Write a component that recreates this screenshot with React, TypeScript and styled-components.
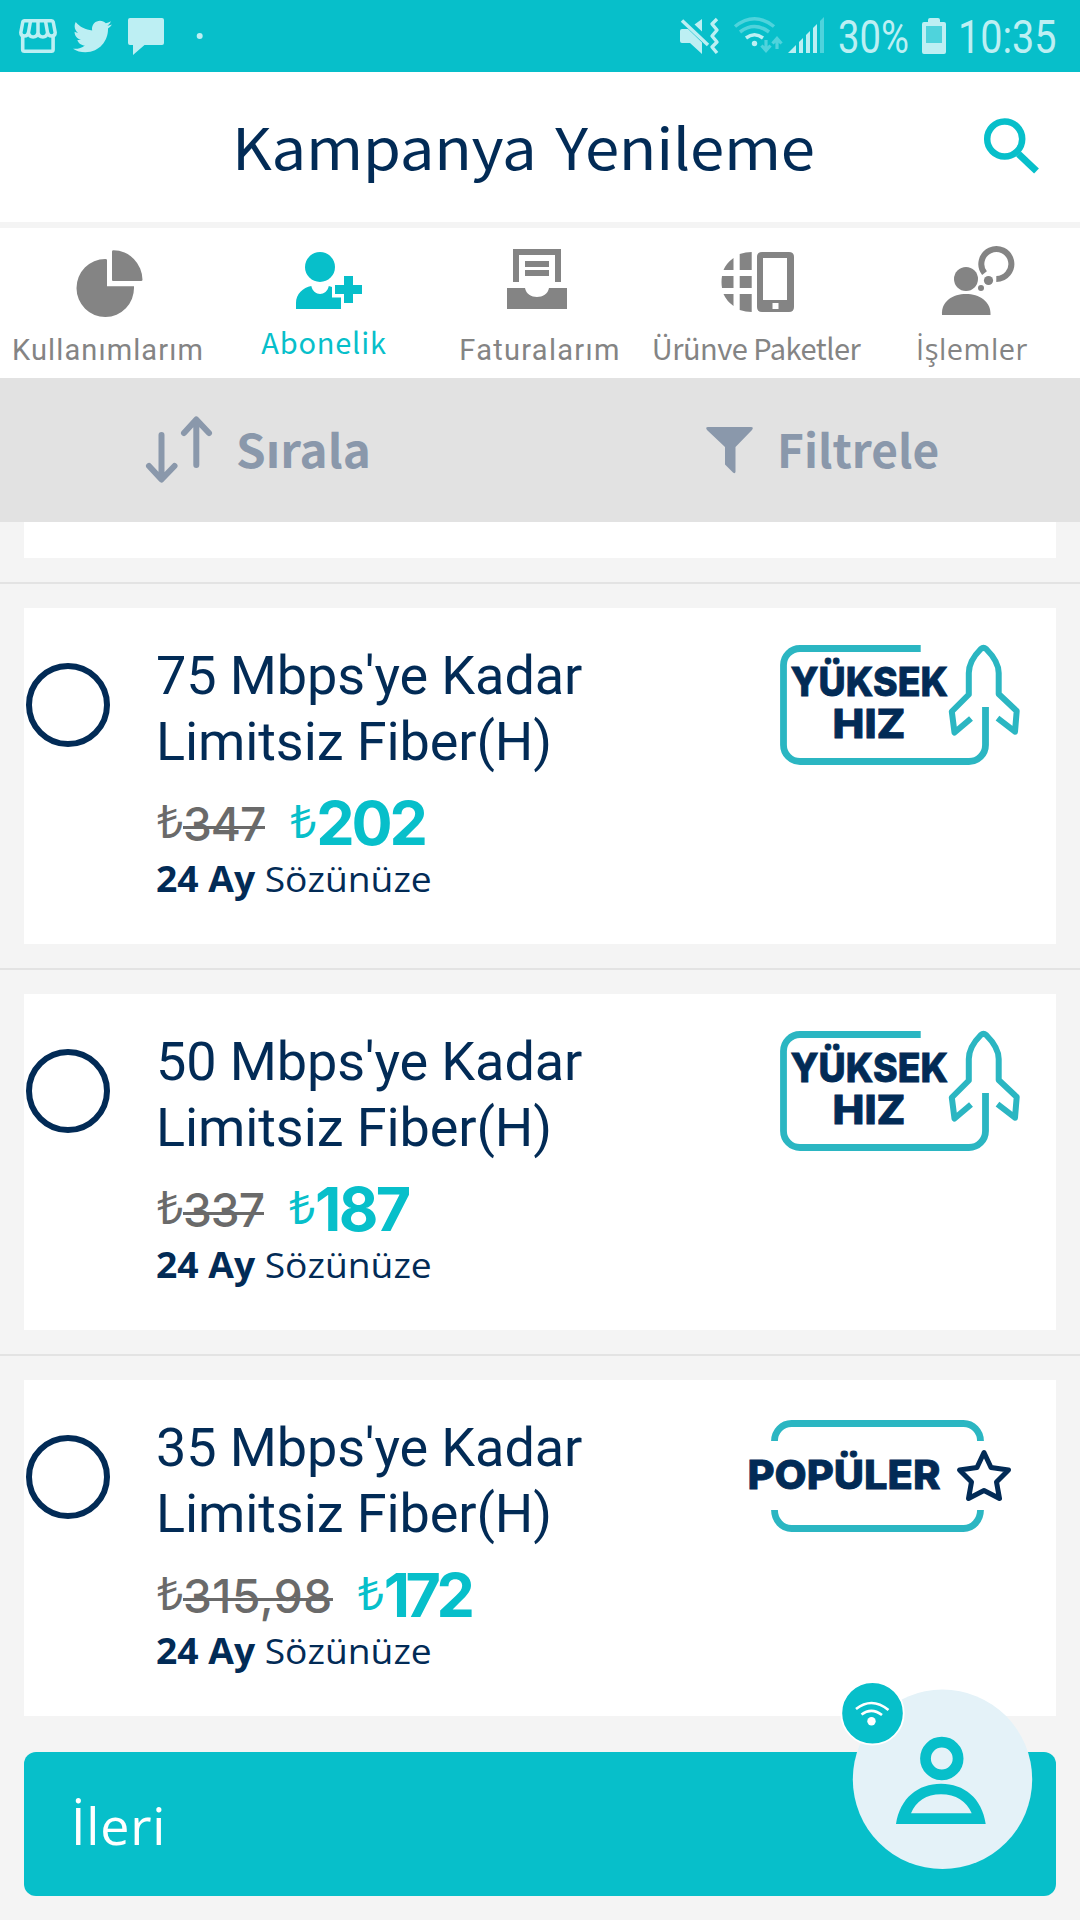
import React from "react";
import styled, { createGlobalStyle } from "styled-components";
import { FaTwitter } from "react-icons/fa";

const teal = "#07bfca";
const badgeTeal = "#2bb6c2";
const navy = "#022b56";
const grey = "#848484";
const slate = "#8a98ab";
const pale = "#bdeff3";
const humanist = `"Noto Sans CJK SC", "Open Sans", sans-serif`;
const sans = `"Open Sans", "Noto Sans", sans-serif`;
const grotesk = `Inter, "Liberation Sans", sans-serif`;

const GlobalStyle = createGlobalStyle`
  * { box-sizing: border-box; }
  body { margin: 0; background: #f4f4f4; }
`;

const Screen = styled.div`
  position: relative;
  width: 1080px;
  height: 1920px;
  overflow: hidden;
  display: flex;
  flex-direction: column;
  background: #f4f4f4;
  color: ${navy};
  font-family: ${sans};
`;

const Icon = styled.svg`
  display: block;
  flex: none;
`;

const StatusBar = styled.div`
  height: 72px;
  flex: none;
  display: flex;
  justify-content: space-between;
  align-items: center;
  background: ${teal};
  color: ${pale};
  padding: 0 24px 0 16px;
`;

const StatusGroup = styled.div`
  display: flex;
  align-items: center;
`;

const Bird = styled(FaTwitter)`
  width: 39px;
  height: 39px;
  margin: 0 14px 0 11px;
`;

const StatusText = styled.span<{ $width: number; $scale: number; $indent?: number }>`
  width: ${(p) => p.$width}px;
  height: 72px;
  padding-left: ${(p) => p.$indent ?? 0}px;
  line-height: 75px;
  font-family: Roboto, sans-serif;
  font-size: 46px;
  white-space: nowrap;
  transform: scaleX(${(p) => p.$scale});
  transform-origin: left;
`;

const Header = styled.header`
  height: 150px;
  flex: none;
  display: flex;
  align-items: center;
  justify-content: space-between;
  background: #fff;
  padding: 0 40px 0 232px;
`;

const Title = styled.h1`
  margin: 0;
  padding-bottom: 5px;
  font-family: ${humanist};
  font-weight: 400;
  font-size: 57px;
  line-height: 80px;
  letter-spacing: -0.3px;
  word-spacing: 5px;
  white-space: nowrap;
  transform: scaleX(1.083);
  transform-origin: left;
`;

const Tabs = styled.nav`
  height: 150px;
  margin-top: 6px;
  flex: none;
  display: grid;
  grid-template-columns: repeat(5, 216px);
  background: #fff;
`;

const Tab = styled.div<{ $active?: boolean }>`
  display: flex;
  flex-direction: column;
  align-items: center;
  padding-top: 16px;
  color: ${(p) => (p.$active ? teal : grey)};
`;

const TabLabel = styled.span<{ $spacing: number; $font: string; $top: number }>`
  margin-top: ${(p) => p.$top}px;
  font-family: ${(p) => p.$font};
  font-size: 29px;
  line-height: 40px;
  letter-spacing: ${(p) => p.$spacing}px;
  white-space: nowrap;
`;

const Toolbar = styled.div`
  height: 144px;
  flex: none;
  display: grid;
  grid-template-columns: 1fr 1fr;
  background: #e2e2e2;
  color: ${slate};
`;

const ToolButton = styled.div<{ $left: number }>`
  display: flex;
  align-items: center;
  padding-left: ${(p) => p.$left}px;
`;

const ToolLabel = styled.span<{ $gap: number; $scale: number }>`
  margin-left: ${(p) => p.$gap}px;
  padding-bottom: 4px;
  font-family: ${humanist};
  font-weight: 700;
  font-size: 46px;
  line-height: 60px;
  transform: scaleX(${(p) => p.$scale});
  transform-origin: left;
`;

const Remainder = styled.div`
  height: 36px;
  flex: none;
  margin: 0 24px 24px;
  background: #fff;
`;

const Offer = styled.section`
  flex: none;
  border-top: 2px solid #e3e3e3;
  padding: 24px;
`;

const Card = styled.div`
  height: 336px;
  display: flex;
  align-items: flex-start;
  background: #fff;
  padding-left: 2px;
`;

const Radio = styled.div`
  width: 84px;
  height: 84px;
  margin-top: 55px;
  flex: none;
  border: 6px solid ${navy};
  border-radius: 50%;
`;

const Details = styled.div`
  width: 566px;
  margin-left: 46px;
  padding-top: 35px;
`;

const PlanName = styled.div`
  font-family: Roboto, sans-serif;
  font-size: 54px;
  line-height: 66px;
  letter-spacing: -0.1px;
  white-space: pre;
`;

const Prices = styled.div`
  display: flex;
  align-items: flex-start;
  height: 60px;
  margin-top: 17px;
  padding-left: 1px;
`;

const Lira = styled.span<{ $new?: boolean }>`
  width: ${(p) => (p.$new ? 26 : 26)}px;
  margin-top: -2px;
  font-weight: 400;
  font-size: 46px;
  line-height: 60px;
  color: ${(p) => (p.$new ? teal : "#6a6a6a")};
`;

const OldPrice = styled.span<{ $spacing: number }>`
  margin: 2px 25px 0 0;
  font-family: ${grotesk};
  font-weight: 500;
  font-size: 46px;
  line-height: 60px;
  letter-spacing: ${(p) => p.$spacing}px;
  color: #6a6a6a;
  background: linear-gradient(#6a6a6a, #6a6a6a) 0 32px / 100% 3px no-repeat;
`;

const NewPrice = styled.span<{ $spacing: number }>`
  margin-top: 1px;
  font-family: ${grotesk};
  font-weight: 700;
  font-size: 61px;
  line-height: 60px;
  letter-spacing: ${(p) => p.$spacing}px;
  color: ${teal};
`;

const Term = styled.div`
  margin-top: 5px;
  font-size: 35px;
  line-height: 44px;
  white-space: pre;
  transform: scaleX(1.063);
  transform-origin: left;
`;

const Footer = styled.div`
  position: relative;
  margin: 12px 24px 0;
  height: 144px;
  flex: none;
`;

const NextButton = styled.div`
  height: 144px;
  display: flex;
  align-items: center;
  padding-left: 47px;
  border-radius: 12px;
  background: ${teal};
  color: #fff;
  font-weight: 400;
  font-size: 52px;
  letter-spacing: 0.8px;
`;

const Assistant = styled.div`
  position: absolute;
  left: 816px;
  top: -72px;
`;

const BadgeText = styled.text`
  fill: ${navy};
  stroke: ${navy};
  stroke-width: 0.8px;
  font-family: ${grotesk};
  font-weight: 800;
`;

function FastBadge() {
  return (
    <Icon width="260" height="150" viewBox="770 630 260 150" fill="none" stroke={badgeTeal}>
      <path d="M920.7 648.5H800a16.500 16.500 0 0 0-16.500 16.500v80a16.500 16.500 0 0 0 16.500 16.500h169a16.500 16.500 0 0 0 16.500-16.500v-38" strokeWidth="6.8" />
      <path
        d="M971 718.500l-16.500 14-2.700-21 17-17v-21.500c0-9 5.500-17.500 12-24q2.700-2.200 5.400 0c6.500 6.500 12.500 15 12.500 24v21l18 17-1.700 20.700-17.500-13.500"
        strokeWidth="6"
        strokeLinejoin="round"
      />
      <BadgeText x="790.500" y="696" fontSize="40" textLength="157.500" lengthAdjust="spacingAndGlyphs">YÜKSEK</BadgeText>
      <BadgeText x="832.500" y="738" fontSize="40" textLength="73" lengthAdjust="spacingAndGlyphs">HIZ</BadgeText>
    </Icon>
  );
}

function PopularBadge() {
  return (
    <Icon width="290" height="150" viewBox="740 1402 290 150" fill="none" stroke={badgeTeal}>
      <path d="M774.500 1441a17 17.500 0 0 1 17-17.500h172a17 17.500 0 0 1 17 17.500M774.500 1510a17 18.500 0 0 0 17 18.500h172a17 18.500 0 0 0 17-18.500" strokeWidth="6.800" />
      <path
        d="M984 1452.500l7 15 17.500 2.500-12 12 3 16.500-15.500-8-15.500 8 3-16.500-12-12 17.500-2.500z"
        stroke={navy}
        strokeWidth="5"
        strokeLinejoin="round"
      />
      <BadgeText x="747.500" y="1488.500" fontSize="40" textLength="193" lengthAdjust="spacingAndGlyphs">POPÜLER</BadgeText>
    </Icon>
  );
}

const offers = [
  { name: "75 Mbps'ye Kadar\nLimitsiz Fiber(H)", old: "347", oldSpacing: -1, now: "202", nowSpacing: -3.2, badge: "fast" },
  { name: "50 Mbps'ye Kadar\nLimitsiz Fiber(H)", old: "337", oldSpacing: -1, now: "187", nowSpacing: -2.6, badge: "fast" },
  { name: "35 Mbps'ye Kadar\nLimitsiz Fiber(H)", old: "315,98", oldSpacing: 0.5, now: "172", nowSpacing: -4.5, badge: "popular" },
];

const BadgeSlot = styled.div<{ $popular: boolean }>`
  margin-top: 22px;
  margin-left: ${(p) => (p.$popular ? 18 : 48)}px;
`;

const tabIcon = { width: 216, height: 76, fill: "currentColor" };

export default function App() {
  return (
    <>
      <GlobalStyle />
      <Screen>
        <StatusBar>
          <StatusGroup>
            <Icon width="46" height="40" viewBox="16 16 46 40" fill="none" stroke={pale} strokeWidth="3.6" strokeLinejoin="round">
              <path d="M22.700 36v13.500q0 1.700 1.700 1.700h27q1.700 0 1.700-1.700V36" />
              <path d="M24.500 20.700h27q1.400 0 1.700 1.300l2 10.500q0 3.500-3.600 3.500-3.400 0-4-3.500-.8 4.500-4.700 4.500-4.200 0-4.900-4.500-.7 4.500-4.900 4.500-3.900 0-4.700-4.500-.6 3.500-4 3.500-3.600 0-3.600-3.500l2-10.500q.3-1.300 1.700-1.300zM30.500 21l-2.100 12M45.500 21l2.100 12M38 21v13" strokeWidth="3.500" />
            </Icon>
            <Bird />
            <Icon width="84" height="40" viewBox="126 16 84 40" fill={pale}>
              <path d="M130 18h32q2 0 2 2v23q0 2-2 2h-17.500L133 55V45h-3q-2 0-2-2V20q0-2 2-2z" />
              <circle cx="199.700" cy="36" r="3" />
            </Icon>
          </StatusGroup>
          <StatusGroup>
            <Icon width="150" height="44" viewBox="678 14 150 44" fill={pale}>
              <path d="M682 29h6l14 13.500V54L690 43h-8q-2 0-2-2V31q0-2 2-2zM702 19v12.500l-7.500-7z" />
              <path d="M682 20.500l26 24.500" stroke={pale} strokeWidth="3.500" />
              <path d="M717 19l-5 5 5 6-5 6 5 6-5 5 5 6" fill="none" stroke={pale} strokeWidth="3.400" strokeLinejoin="round" />
              <g fill="none" stroke="#4fd3dc" strokeWidth="3.500">
                <path d="M735 26.500q19.500-15.500 39 0M740 32q14.500-11 29 0" />
                <path d="M746 38q8.500-6.500 17 0" stroke={pale} />
                <path d="M766 40v10M761.500 45.500l4.500 5 4.500-5M777 49V39M772.500 43.500l4.500-5 4.500 5" strokeWidth="3.200" />
              </g>
              <circle cx="754.500" cy="43.500" r="2.700" />
              <path d="M788 53l8-8v8zM799 42l4-4v15h-4zM806 35l4-4v22h-4zM813 28l4-4v29h-4z" />
              <path d="M820 21l4-4v36h-4z" fill="#4fd3dc" />
            </Icon>
            <StatusText $width={82} $scale={0.83} $indent={12}>30%</StatusText>
            <Icon width="48" height="40" viewBox="910 16 48 40" fill={pale}>
              <path d="M928 22v-2q0-2 2-2h8q2 0 2 2v2h4q2 0 2 2v28q0 2-2 2h-20q-2 0-2-2V24q0-2 2-2z" />
              <path d="M926 26h16v17h-16z" fill="#4fd3dc" />
            </Icon>
            <StatusText $width={98} $scale={0.86}>10:35</StatusText>
          </StatusGroup>
        </StatusBar>

        <Header>
          <Title>Kampanya Yenileme</Title>
          <Icon width="60" height="60" viewBox="980 117 60 60" fill="none" stroke={teal}>
            <circle cx="1004.700" cy="139" r="17.500" strokeWidth="6.500" />
            <path d="M1018.500 154l18 17" strokeWidth="7" />
          </Icon>
        </Header>

        <Tabs>
          <Tab>
            <Icon {...tabIcon} viewBox="0 244 216 76">
              <path d="M107 260v26.300h27v1.200a28.750 29 0 1 1-28.750-28.500q1.750 0 1.750 1zM112 251.500q0-1.200 1.500-1.200a29 30 0 0 1 29 29.500q0 1.200-1.500 1.200h-28q-1 0-1-1z" />
            </Icon>
            <TabLabel $top={10} $spacing={1.1} $font="Roboto, sans-serif">Kullanımlarım</TabLabel>
          </Tab>
          <Tab $active>
            <Icon {...tabIcon} viewBox="216 244 216 76">
              <circle cx="320" cy="267" r="15" />
              <path d="M296 309v-6c0-9 7-15.500 15.300-17 2.200 10.500 15.400 10.500 17.500 0l3.200 1v10.500h9V309zM344 276h9v9h9v9h-9v9h-9v-9h-9v-9h9z" />
            </Icon>
            <TabLabel $top={1} $spacing={0.8} $font={humanist}>Abonelik</TabLabel>
          </Tab>
          <Tab>
            <Icon {...tabIcon} viewBox="432 244 216 76">
              <path d="M513 249h48v33h-6v-27h-36v27h-6zM525 261h24v6h-24zM525 270h24v6h-24zM507 288h18c2 12 22 12 24 0h18v21h-60z" />
            </Icon>
            <TabLabel $top={10} $spacing={1.3} $font="Roboto, sans-serif">Faturalarım</TabLabel>
          </Tab>
          <Tab>
            <Icon {...tabIcon} viewBox="648 244 216 76">
              <path d="M733.500 258v12h-10q3-7 10-12zM739.700 254q6-2 12-2v18h-12zM722 276h11.500v12H722q-1-6 0-12zM739.700 276h12v12h-12zM723.500 294h10v12q-7-5-10-12zM739.700 294h12v18q-6 0-12-2z" />
              <path fillRule="evenodd" d="M762 252h27q5 0 5 5v50q0 5-5 5h-27q-5 0-5-5v-50q0-5 5-5zM763 258v42h24v-42zM772.500 303v6h6v-6z" />
            </Icon>
            <TabLabel $top={7} $spacing={-0.5} $font={humanist}>Ürünve Paketler</TabLabel>
          </Tab>
          <Tab>
            <Icon {...tabIcon} viewBox="864 244 216 76">
              <circle cx="966" cy="279" r="12" />
              <path d="M942 315c-1-14 11-21 24-21s25 7 24.500 21z" />
              <path d="M984.500 273.200a15 15 0 1 1 11.800 5.800" fill="none" stroke="currentColor" strokeWidth="6" />
              <circle cx="988.500" cy="280.500" r="4.600" />
              <circle cx="981" cy="288" r="3" />
            </Icon>
            <TabLabel $top={9} $spacing={0.5} $font={sans}>İşlemler</TabLabel>
          </Tab>
        </Tabs>

        <Toolbar>
          <ToolButton $left={142}>
            <Icon width="74" height="74" viewBox="142 413 74 74" fill="none" stroke={slate} strokeWidth="6" strokeLinecap="round" strokeLinejoin="round">
              <path d="M161.500 435v44M149 466l12.500 13.500 13-13.500M196.300 465v-44M184 433l12.300-13.500 12.700 13.500" />
            </Icon>
            <ToolLabel $gap={20} $scale={1.035}>Sırala</ToolLabel>
          </ToolButton>
          <ToolButton $left={162}>
            <Icon width="56" height="56" viewBox="702 422 56 56" fill={slate}>
              <path d="M708 427h43q3 0 1 3l-16.500 17v25q-.5 2-2.500.500l-8-8V447L707 430q-2-3 1-3z" />
            </Icon>
            <ToolLabel $gap={19} $scale={1}>Filtrele</ToolLabel>
          </ToolButton>
        </Toolbar>

        <Remainder />
        {offers.map((o) => (
          <Offer key={o.name}>
            <Card>
              <Radio />
              <Details>
                <PlanName>{o.name}</PlanName>
                <Prices>
                  <Lira>₺</Lira>
                  <OldPrice $spacing={o.oldSpacing}>{o.old}</OldPrice>
                  <Lira $new>₺</Lira>
                  <NewPrice $spacing={o.nowSpacing}>{o.now}</NewPrice>
                </Prices>
                <Term><b>24 Ay</b> Sözünüze</Term>
              </Details>
              <BadgeSlot $popular={o.badge === "popular"}>
                {o.badge === "popular" ? <PopularBadge /> : <FastBadge />}
              </BadgeSlot>
            </Card>
          </Offer>
        ))}

        <Footer>
          <NextButton>İleri</NextButton>
          <Assistant>
            <Icon width="196" height="196" viewBox="840 1680 196 196">
              <circle cx="942.500" cy="1779.300" r="89.700" fill="#e4f2f8" />
              <circle cx="941.800" cy="1758.500" r="16.300" fill="none" stroke={teal} strokeWidth="10.800" />
              <path fillRule="evenodd" fill={teal} d="M896 1824c4-26 22-40.300 45-40.300s41 14.300 44.700 40.300zM911 1813.300h60.700c-5-12-16-19-30.700-19s-25 7-30 19z" />
              <circle cx="872.500" cy="1713.300" r="31.200" fill={teal} stroke="#fff" strokeWidth="1.800" />
              <g fill="none" stroke="#fff" strokeWidth="2.600">
                <path d="M856 1709q16-12.500 32.500 1M861.500 1714.500q10-7.500 20.500.500" />
              </g>
              <circle cx="871.500" cy="1721.300" r="4.200" fill="#fff" />
            </Icon>
          </Assistant>
        </Footer>
      </Screen>
    </>
  );
}
